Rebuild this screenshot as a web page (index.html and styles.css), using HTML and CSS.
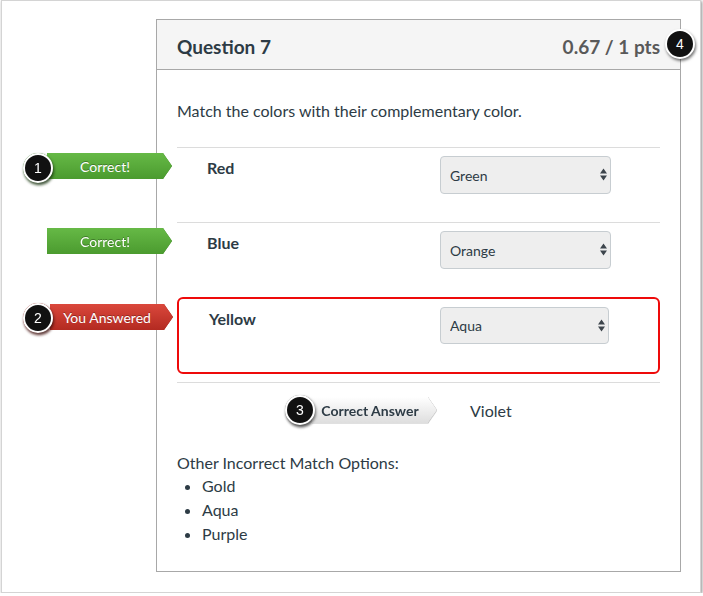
FILE: index.html
```html
<!DOCTYPE html>
<html lang="en">

<head>
    <meta charset="UTF-8">
    <meta name="viewport" content="width=device-width, initial-scale=1.0">
    <title>Question 7</title>
    <link rel="stylesheet" href="styles.css">
</head>

<body>
    <div class="screen">
        <div class="quiz-card">
            <div class="quiz-header">
                <h2 class="quiz-title">Question 7</h2>
                <span class="quiz-points">0.67 / 1 pts</span>
                <span class="step step-4">4</span>
            </div>

            <div class="quiz-body">
                <p class="quiz-text">Match the colors with their complementary color.</p>

                <div class="answer">
                    <div class="flag flag-correct">
                        <div class="flag-body">Correct!</div>
                        <span class="step step-1">1</span>
                    </div>
                    <div class="answer-label">Red</div>
                    <div class="select-wrap">
                        <select class="answer-select"><option>Green</option></select>
                        <svg class="select-arrows" width="7" height="13" viewBox="0 0 7 13">
                            <path d="M3.5 0.5 L7 5.5 H0 Z M3.5 12.5 L7 7.5 H0 Z" fill="#3d454c" />
                        </svg>
                    </div>
                </div>

                <div class="answer">
                    <div class="flag flag-correct">
                        <div class="flag-body">Correct!</div>
                    </div>
                    <div class="answer-label">Blue</div>
                    <div class="select-wrap">
                        <select class="answer-select"><option>Orange</option></select>
                        <svg class="select-arrows" width="7" height="13" viewBox="0 0 7 13">
                            <path d="M3.5 0.5 L7 5.5 H0 Z M3.5 12.5 L7 7.5 H0 Z" fill="#3d454c" />
                        </svg>
                    </div>
                </div>

                <div class="answer wrong">
                    <div class="flag flag-wrong">
                        <div class="flag-body">You Answered</div>
                        <span class="step step-2">2</span>
                    </div>
                    <div class="answer-label">Yellow</div>
                    <div class="select-wrap">
                        <select class="answer-select"><option>Aqua</option></select>
                        <svg class="select-arrows" width="7" height="13" viewBox="0 0 7 13">
                            <path d="M3.5 0.5 L7 5.5 H0 Z M3.5 12.5 L7 7.5 H0 Z" fill="#3d454c" />
                        </svg>
                    </div>
                </div>

                <div class="correct-row">
                    <div class="correct-slot">
                        <div class="answer-tag">
                            <div class="answer-tag-body">Correct Answer</div>
                            <span class="step step-3">3</span>
                        </div>
                    </div>
                    <div class="correct-value">Violet</div>
                </div>

                <p class="other-title">Other Incorrect Match Options:</p>
                <ul class="other-list">
                    <li>Gold</li>
                    <li>Aqua</li>
                    <li>Purple</li>
                </ul>
            </div>
        </div>
    </div>
</body>

</html>
```

FILE: styles.css
```css
body {
    margin: 0;
    padding: 0;
    background-color: #fff;
    font-family: Lato, "Open Sans", Arial, sans-serif;
    color: #2d3b45;
}

.screen {
    margin-left: 1px;
    width: 700px;
    height: 593px;
    box-sizing: border-box;
    padding: 18px 0 0 154px;
    border: 1px solid #d4d4d4;
    box-shadow: 1px 1px 3px rgba(0, 0, 0, 0.45);
}

.quiz-card {
    width: 525px;
    height: 553px;
    box-sizing: border-box;
    border: 1px solid #a8a8a8;
}

.quiz-header {
    position: relative;
    display: flex;
    justify-content: space-between;
    align-items: center;
    height: 50px;
    box-sizing: border-box;
    padding: 3px 20px 0;
    background-color: #f5f5f5;
    border-bottom: 1px solid #a8a8a8;
}

.quiz-title {
    margin: 0;
    font-size: 19px;
    font-weight: 700;
}

.quiz-points {
    font-size: 19px;
    font-weight: 700;
    color: #595959;
}

.quiz-body {
    padding: 30px 20px 0;
}

.quiz-text {
    margin: 0 0 25px;
    font-size: 16px;
    line-height: 22px;
}

.answer {
    position: relative;
    display: flex;
    align-items: flex-start;
    padding: 8px 0 28px 30px;
    border-top: 1px solid #dcdcdc;
}

.answer.wrong {
    padding: 8px 0 28px 30px;
    margin-bottom: 8px;
    border: 2px solid #ee0a0a;
    border-radius: 6px;
}

.answer-label {
    flex: 0 0 233px;
    font-size: 16px;
    font-weight: 700;
    line-height: 24px;
}

.wrong .answer-label {
    flex-basis: 231px;
}

.select-wrap {
    position: relative;
}

.answer-select {
    appearance: none;
    -webkit-appearance: none;
    display: block;
    width: 171px;
    height: 38px;
    margin: 0;
    padding: 0 0 0 9px;
    background-color: #eeeeee;
    border: 1px solid #c7cdd1;
    border-radius: 4px;
    font-family: Lato, "Open Sans", Arial, sans-serif;
    font-size: 14px;
    color: #2d3b45;
}

.wrong .answer-select {
    width: 169px;
    height: 37px;
}

.select-arrows {
    position: absolute;
    top: 12px;
    right: 4px;
    pointer-events: none;
}

/* result flags hanging off the left side */
.flag {
    position: absolute;
    top: 5px;
}

.flag-body {
    display: flex;
    align-items: center;
    justify-content: center;
    height: 26px;
    box-sizing: border-box;
    padding-right: 9px;
    color: #fff;
    font-size: 14px;
    text-shadow: 0 -1px 0 rgba(0, 0, 0, 0.3);
    clip-path: polygon(0 0, calc(100% - 9px) 0, 100% 50%, calc(100% - 9px) 100%, 0 100%);
}

.flag-correct {
    left: -130px;
    filter: drop-shadow(0 0 0.6px #3c7d25);
}

.flag-correct .flag-body {
    width: 125px;
    background: linear-gradient(#66b946, #4b9b2f);
}

.flag-wrong {
    left: -129px;
    filter: drop-shadow(0 0 0.6px #962018);
}

.flag-wrong .flag-body {
    width: 123px;
    background: linear-gradient(#da483c, #b32a21);
}

.correct-row {
    display: flex;
    align-items: center;
    padding: 14px 0 0 30px;
    border-top: 1px solid #dcdcdc;
}

.correct-slot {
    flex: 0 0 233px;
    display: flex;
    justify-content: flex-end;
    padding-right: 3px;
    box-sizing: border-box;
}

.answer-tag {
    position: relative;
    filter: drop-shadow(0 0 0.7px #8c8c8c) drop-shadow(0 1px 0 rgba(0, 0, 0, 0.12));
}

.answer-tag-body {
    display: flex;
    align-items: center;
    justify-content: center;
    width: 125px;
    height: 26px;
    box-sizing: border-box;
    padding-right: 9px;
    background: linear-gradient(#ffffff, #dedede);
    font-size: 14px;
    font-weight: 700;
    color: #2d3b45;
    clip-path: polygon(0 0, calc(100% - 9px) 0, 100% 50%, calc(100% - 9px) 100%, 0 100%);
}

.correct-value {
    margin-left: 30px;
    font-size: 16px;
}

.other-title {
    margin: 28px 0 0;
    font-size: 16px;
    line-height: 23px;
}

.other-list {
    margin: 0;
    padding-left: 25px;
    font-size: 16px;
    line-height: 24px;
}

/* numbered callouts */
.step {
    position: absolute;
    z-index: 2;
    display: flex;
    align-items: center;
    justify-content: center;
    width: 30px;
    height: 30px;
    box-sizing: border-box;
    border: 2px solid #fff;
    border-radius: 50%;
    background-color: #111;
    color: #fff;
    font-family: Arial, "Liberation Sans", sans-serif;
    font-size: 14px;
    box-shadow: 1px 2px 3px rgba(0, 0, 0, 0.55);
}

.step-1 {
    left: -24px;
    top: 0;
}

.step-2 {
    left: -27px;
    top: -1px;
}

.step-3 {
    left: -27px;
    top: -2px;
}

.step-4 {
    right: -15px;
    top: 9px;
}
```
